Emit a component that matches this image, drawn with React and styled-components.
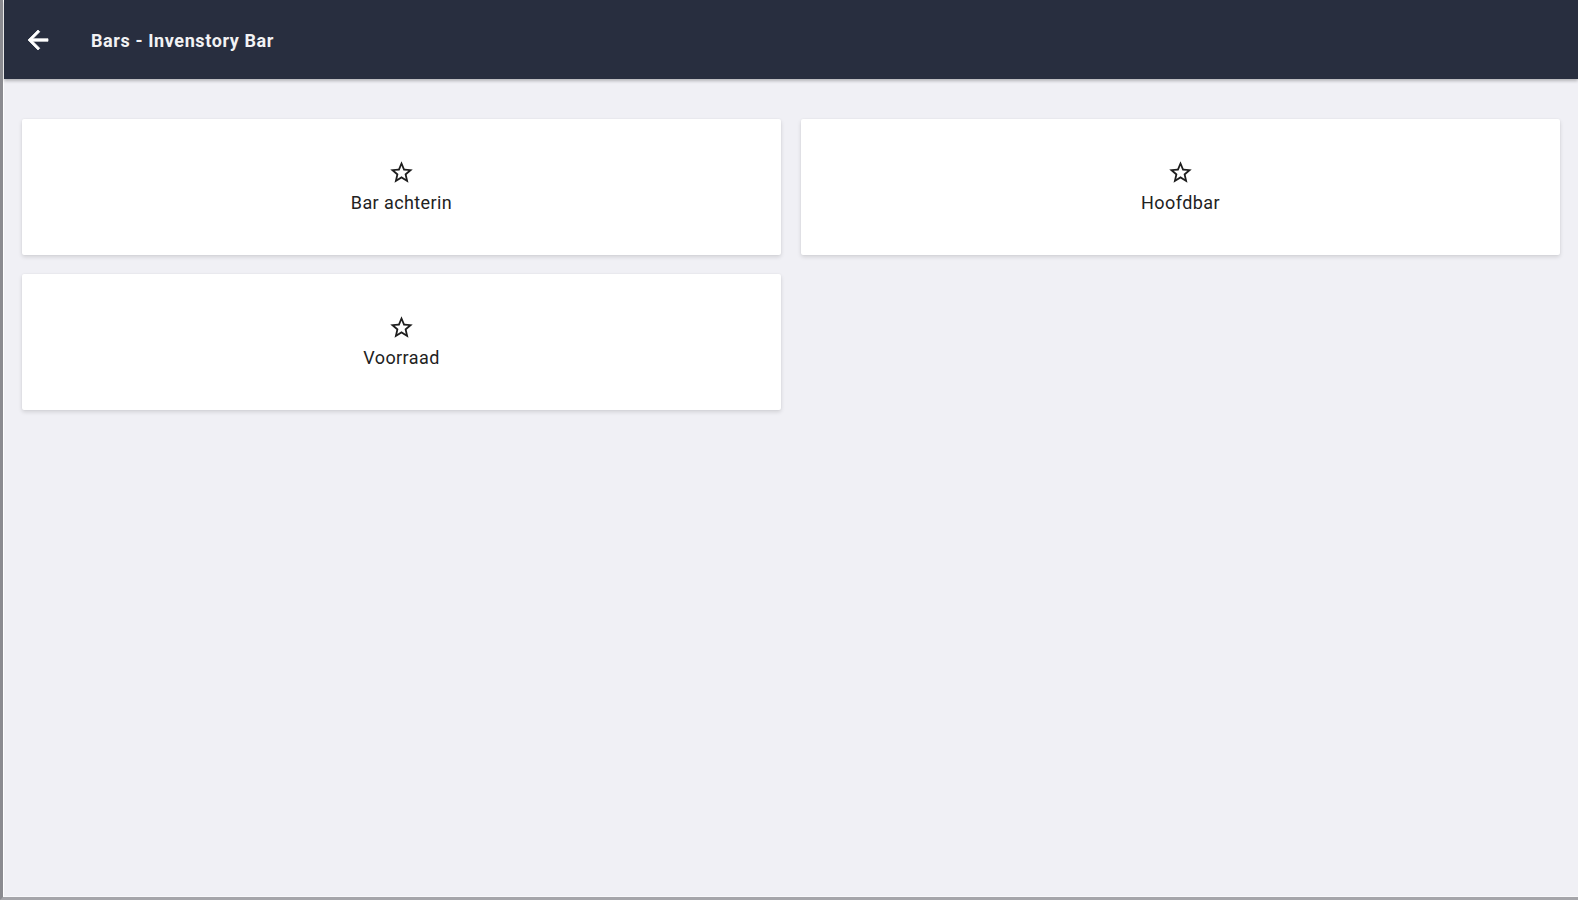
import React from "react";
import styled, { createGlobalStyle } from "styled-components";

const Global = createGlobalStyle`
  html, body { margin: 0; padding: 0; height: 100%; }
  body { font-family: Roboto, "Liberation Sans", Arial, sans-serif; background: #f0f0f5; }
  #root { height: 100%; }
`;

const Frame = styled.div`
  height: 100vh;
  box-sizing: border-box;
  display: flex;
  flex-direction: column;
  border-left: 3px solid #8b8b90;
  border-bottom: 3px solid #a5a5aa;
  overflow: hidden;
`;

const Inner = styled.div`
  flex: 1;
  display: flex;
  flex-direction: column;
  border-left: 1px solid #ffffff;
  border-bottom: 1px solid #f8f8fb;
  background: #f0f0f5;
`;

const Toolbar = styled.header`
  height: 79px;
  flex-shrink: 0;
  display: flex;
  align-items: center;
  padding-left: 17px;
  background: #282e3f;
  box-shadow: 0 2px 3px rgba(0, 0, 0, 0.25);
  position: relative;
  z-index: 1;
`;

const BackButton = styled.button`
  width: 34px;
  height: 34px;
  padding: 0;
  border: none;
  background: transparent;
  display: flex;
  align-items: center;
  justify-content: center;
  color: #ffffff;
  cursor: pointer;
  margin-top: 1px;
`;

const Title = styled.h1`
  margin: 1px 0 0 36px;
  font-family: Roboto, "Liberation Sans", Arial, sans-serif;
  font-size: 18px;
  font-weight: 700;
  letter-spacing: 0.6px;
  color: #f2f2f4;
`;

const Grid = styled.main`
  display: grid;
  grid-template-columns: 1fr 1fr;
  column-gap: 20px;
  row-gap: 19px;
  padding: 40px 18px 0 18px;
`;

const Card = styled.button`
  height: 136px;
  box-sizing: border-box;
  border: none;
  border-radius: 2px;
  background: #ffffff;
  box-shadow: 0 2px 4px rgba(0, 0, 0, 0.13), 0 0 2px rgba(0, 0, 0, 0.05);
  display: flex;
  flex-direction: column;
  align-items: center;
  justify-content: center;
  gap: 7px;
  cursor: pointer;
  padding: 0 0 3px 0;
`;

const Label = styled.span`
  font-family: Roboto, "Liberation Sans", Arial, sans-serif;
  font-size: 18px;
  font-weight: 400;
  letter-spacing: 0.4px;
  color: #222222;
  line-height: 20px;
`;

const StarIcon = () => (
  <svg width="27" height="27" viewBox="0 0 24 24" fill="#1e1e1e">
    <path d="M22 9.24l-7.19-.62L12 2 9.19 8.63 2 9.24l5.46 4.73L5.82 21 12 17.27 18.18 21l-1.63-7.03L22 9.24zM12 15.4l-3.76 2.27 1-4.28-3.32-2.88 4.38-.38L12 6.1l1.71 4.04 4.38.38-3.32 2.88 1 4.28L12 15.4z" />
  </svg>
);

const BackIcon = () => (
  <svg width="30" height="30" viewBox="0 0 24 24" fill="currentColor">
    <path d="M20 11H7.83l5.59-5.59L12 4l-8 8 8 8 1.41-1.41L7.83 13H20v-2z" stroke="currentColor" strokeWidth="0.6" />
  </svg>
);

const bars = ["Bar achterin", "Hoofdbar", "Voorraad"];

export default function App() {
  return (
    <>
      <Global />
      <Frame>
        <Inner>
          <Toolbar>
            <BackButton aria-label="Terug">
              <BackIcon />
            </BackButton>
            <Title>Bars - Invenstory Bar</Title>
          </Toolbar>
          <Grid>
            {bars.map((b) => (
              <Card key={b}>
                <StarIcon />
                <Label>{b}</Label>
              </Card>
            ))}
          </Grid>
        </Inner>
      </Frame>
    </>
  );
}
